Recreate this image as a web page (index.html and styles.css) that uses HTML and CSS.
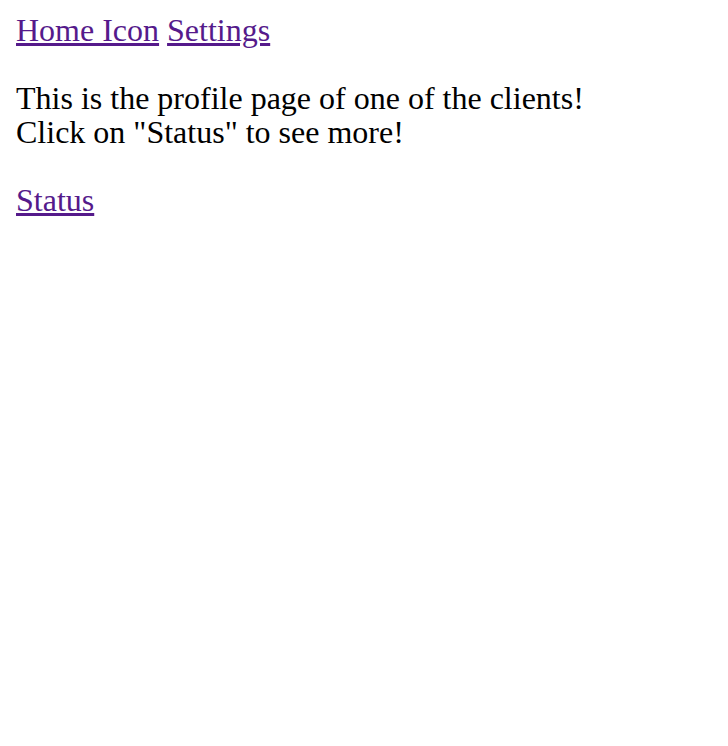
FILE: index.html
```html
<!DOCTYPE html>
<html>
<head>
<meta charset="utf-8">
<title>Profile</title>
<link rel="stylesheet" href="styles.css">
</head>
<body class="page">
<nav class="nav"><a href="#" class="link">Home Icon</a> <a href="#" class="link">Settings</a></nav>
<p class="text">This is the profile page of one of the clients!<br>Click on "Status" to see more!</p>
<a href="#" class="link">Status</a>
</body>
</html>
```
FILE: styles.css
```css
html { background: #fff; }
.page {
  margin: 13px 16px 16px;
  font-family: "Liberation Serif", "Times New Roman", serif;
  font-size: 32px;
  line-height: 34px;
  color: #000;
}
.nav { display: block; }
.link { color: #551a8b; text-decoration: underline; }
.text { margin: 34px 0; }
```
